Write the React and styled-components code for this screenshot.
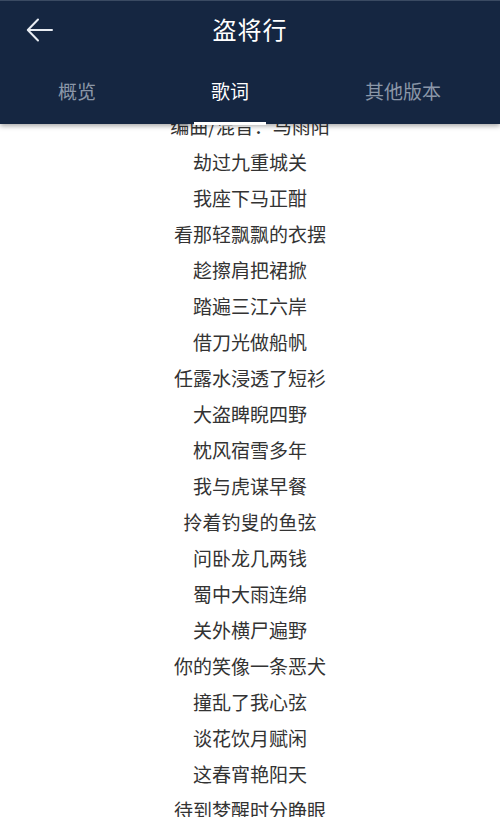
import styled, { createGlobalStyle } from "styled-components";

const GlobalStyle = createGlobalStyle`
  html, body {
    margin: 0;
    padding: 0;
    background: #ffffff;
    font-family: "Noto Sans CJK SC", "Noto Sans", sans-serif;
  }
`;

const Page = styled.div`
  width: 500px;
  height: 817px;
  overflow: hidden;
  position: relative;
  background: #ffffff;
`;

const Header = styled.header`
  position: absolute;
  top: 0;
  left: 0;
  right: 0;
  z-index: 10;
  height: 124px;
  background: #152641;
  border-top: 1px solid #3a4a62;
  box-sizing: border-box;
  box-shadow: 0 2px 5px rgba(0, 0, 0, 0.35);
  display: flex;
  flex-direction: column;
`;

const TopBar = styled.div`
  height: 60px;
  box-sizing: border-box;
  padding-bottom: 6px;
  display: flex;
  align-items: center;
  justify-content: center;
  position: relative;
`;

const BackButton = styled.button`
  position: absolute;
  left: 24px;
  top: 13px;
  width: 32px;
  height: 32px;
  padding: 0;
  border: 0;
  background: transparent;
  display: flex;
  align-items: center;
  justify-content: center;
`;

const Title = styled.h1`
  margin: 0;
  color: #ffffff;
  font-size: 24px;
  font-weight: 400;
  letter-spacing: 1px;
`;

const Tabs = styled.nav`
  flex: 1;
  display: flex;
`;

const Tab = styled.div`
  width: ${(p) => p.$w}px;
  position: relative;
  display: flex;
  align-items: center;
  justify-content: center;
  padding-bottom: 4px;
  color: ${(p) => (p.$active ? "#ffffff" : "#8b97a8")};
  font-size: 19px;

  &::after {
    content: "";
    display: ${(p) => (p.$active ? "block" : "none")};
    position: absolute;
    bottom: -1px;
    left: 50%;
    width: 72px;
    height: 3px;
    margin-left: -36px;
    background: #ffffff;
  }
`;

const Lyrics = styled.div`
  padding-top: 108px;
  display: flex;
  flex-direction: column;
  align-items: center;
`;

const Line = styled.p`
  margin: 0;
  height: 36px;
  line-height: 36px;
  font-size: 19px;
  color: #333333;
  white-space: nowrap;
`;

const lines = [
  "编曲/混音：马雨阳",
  "劫过九重城关",
  "我座下马正酣",
  "看那轻飘飘的衣摆",
  "趁擦肩把裙掀",
  "踏遍三江六岸",
  "借刀光做船帆",
  "任露水浸透了短衫",
  "大盗睥睨四野",
  "枕风宿雪多年",
  "我与虎谋早餐",
  "拎着钓叟的鱼弦",
  "问卧龙几两钱",
  "蜀中大雨连绵",
  "关外横尸遍野",
  "你的笑像一条恶犬",
  "撞乱了我心弦",
  "谈花饮月赋闲",
  "这春宵艳阳天",
  "待到梦醒时分睁眼",
  "铁甲寒光向晚",
];

const tabs = [
  { label: "概览", w: 154 },
  { label: "歌词", w: 152, active: true },
  { label: "其他版本", w: 194 },
];

export default function App() {
  return (
    <Page>
      <GlobalStyle />
      <Header>
        <TopBar>
          <BackButton aria-label="返回">
            <svg width="28" height="24" viewBox="0 0 28 24" fill="none">
              <path
                d="M26 12H2M12 1.5L1.8 12L12 22.5"
                stroke="#e8ecf2"
                strokeWidth="2"
                strokeLinecap="round"
                strokeLinejoin="round"
              />
            </svg>
          </BackButton>
          <Title>盗将行</Title>
        </TopBar>
        <Tabs>
          {tabs.map((t) => (
            <Tab key={t.label} $w={t.w} $active={t.active}>
              {t.label}
            </Tab>
          ))}
        </Tabs>
      </Header>
      <Lyrics>
        {lines.map((l, i) => (
          <Line key={i}>{l}</Line>
        ))}
      </Lyrics>
    </Page>
  );
}
